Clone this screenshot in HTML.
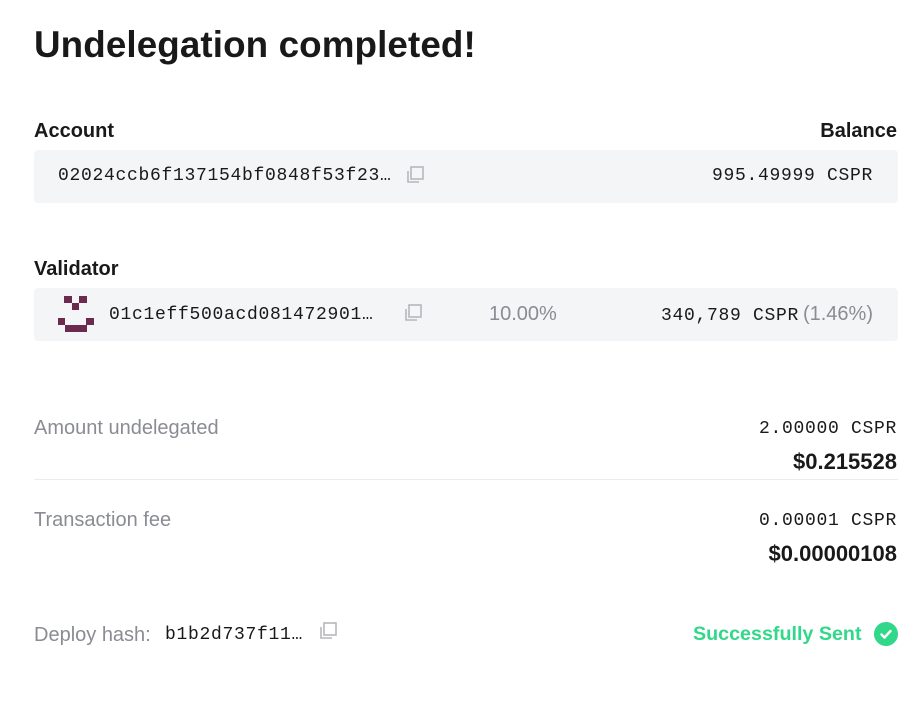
<!DOCTYPE html>
<html><head><meta charset="utf-8"><style>
*{margin:0;padding:0;box-sizing:border-box}
body{width:916px;height:702px;background:#fff;font-family:"Liberation Sans",sans-serif;color:#1a1919;position:relative;overflow:hidden}
.a{position:absolute;white-space:nowrap}
h1{position:absolute;left:34px;top:24px;font-size:36.8px;font-weight:bold;letter-spacing:0.1px}
.lbl{font-size:20px;font-weight:bold}
.box{position:absolute;left:34px;width:864px;height:53px;background:#f4f5f7;border-radius:4px}
.mono{font-family:"Liberation Mono",monospace;font-size:18px;letter-spacing:0.7px;color:#1a1919}
.gray{color:#8a8c93;font-size:20px}
.usd{font-size:22px;font-weight:bold}
.copy{position:absolute;width:20px;height:20px}
</style></head><body>
<h1>Undelegation completed!</h1>
<div class="a lbl" style="left:34px;top:120px">Account</div>
<div class="a lbl" style="right:19px;top:120px">Balance</div>
<div class="box" style="top:150px"></div>
<div class="a mono" style="left:58px;top:166px">02024ccb6f137154bf0848f53f23…</div>
<svg class="copy" style="left:405px;top:165px" viewBox="0 0 20 20" fill="none" stroke="#b5b7bc" stroke-width="1.6"><rect x="6" y="2" width="12" height="12"/><path d="M3 6v11h11"/></svg>
<div class="a mono" style="right:43px;top:166px">995.49999 CSPR</div>

<div class="a lbl" style="left:34px;top:258px">Validator</div>
<div class="box" style="top:288px"></div>
<svg class="a" style="left:58px;top:296px" width="36" height="36" viewBox="0 0 36 36" fill="#6b2a4e"><rect x="6" y="0" width="8" height="7"/><rect x="21" y="0" width="8" height="7"/><rect x="14" y="7" width="7" height="7"/><rect x="0" y="22" width="7" height="7"/><rect x="28" y="22" width="8" height="7"/><rect x="7" y="29" width="22" height="7"/></svg>
<div class="a mono" style="left:109px;top:305px">01c1eff500acd081472901…</div>
<svg class="copy" style="left:403px;top:303px" viewBox="0 0 20 20" fill="none" stroke="#b5b7bc" stroke-width="1.6"><rect x="6" y="2" width="12" height="12"/><path d="M3 6v11h11"/></svg>
<div class="a gray" style="left:489px;top:303px">10.00%</div>
<div class="a" style="right:43px;top:303px"><span class="mono">340,789 CSPR</span><span class="gray" style="margin-left:4px">(1.46%)</span></div>

<div class="a gray" style="left:34px;top:417px">Amount undelegated</div>
<div class="a mono" style="right:19px;top:419px">2.00000 CSPR</div>
<div class="a usd" style="right:19px;top:449px">$0.215528</div>
<div class="a" style="left:34px;top:479px;width:864px;height:1px;background:#ececee"></div>
<div class="a gray" style="left:34px;top:509px">Transaction fee</div>
<div class="a mono" style="right:19px;top:511px">0.00001 CSPR</div>
<div class="a usd" style="right:19px;top:541px">$0.00000108</div>

<div class="a gray" style="left:34px;top:624px">Deploy hash:</div>
<div class="a mono" style="left:165px;top:625px">b1b2d737f11…</div>
<svg class="copy" style="left:318px;top:621px" viewBox="0 0 20 20" fill="none" stroke="#b5b7bc" stroke-width="1.6"><rect x="6" y="2" width="12" height="12"/><path d="M3 6v11h11"/></svg>
<div class="a" style="left:693px;top:623px;font-size:19.7px;font-weight:bold;color:#31d88a">Successfully Sent</div>
<svg class="a" style="left:874px;top:622px" width="24" height="24" viewBox="0 0 24 24"><circle cx="12" cy="12" r="12" fill="#31d88a"/><path d="M7.5 12.5l3 3 6-6.5" fill="none" stroke="#fff" stroke-width="2.4" stroke-linecap="round" stroke-linejoin="round"/></svg>
</body></html>
